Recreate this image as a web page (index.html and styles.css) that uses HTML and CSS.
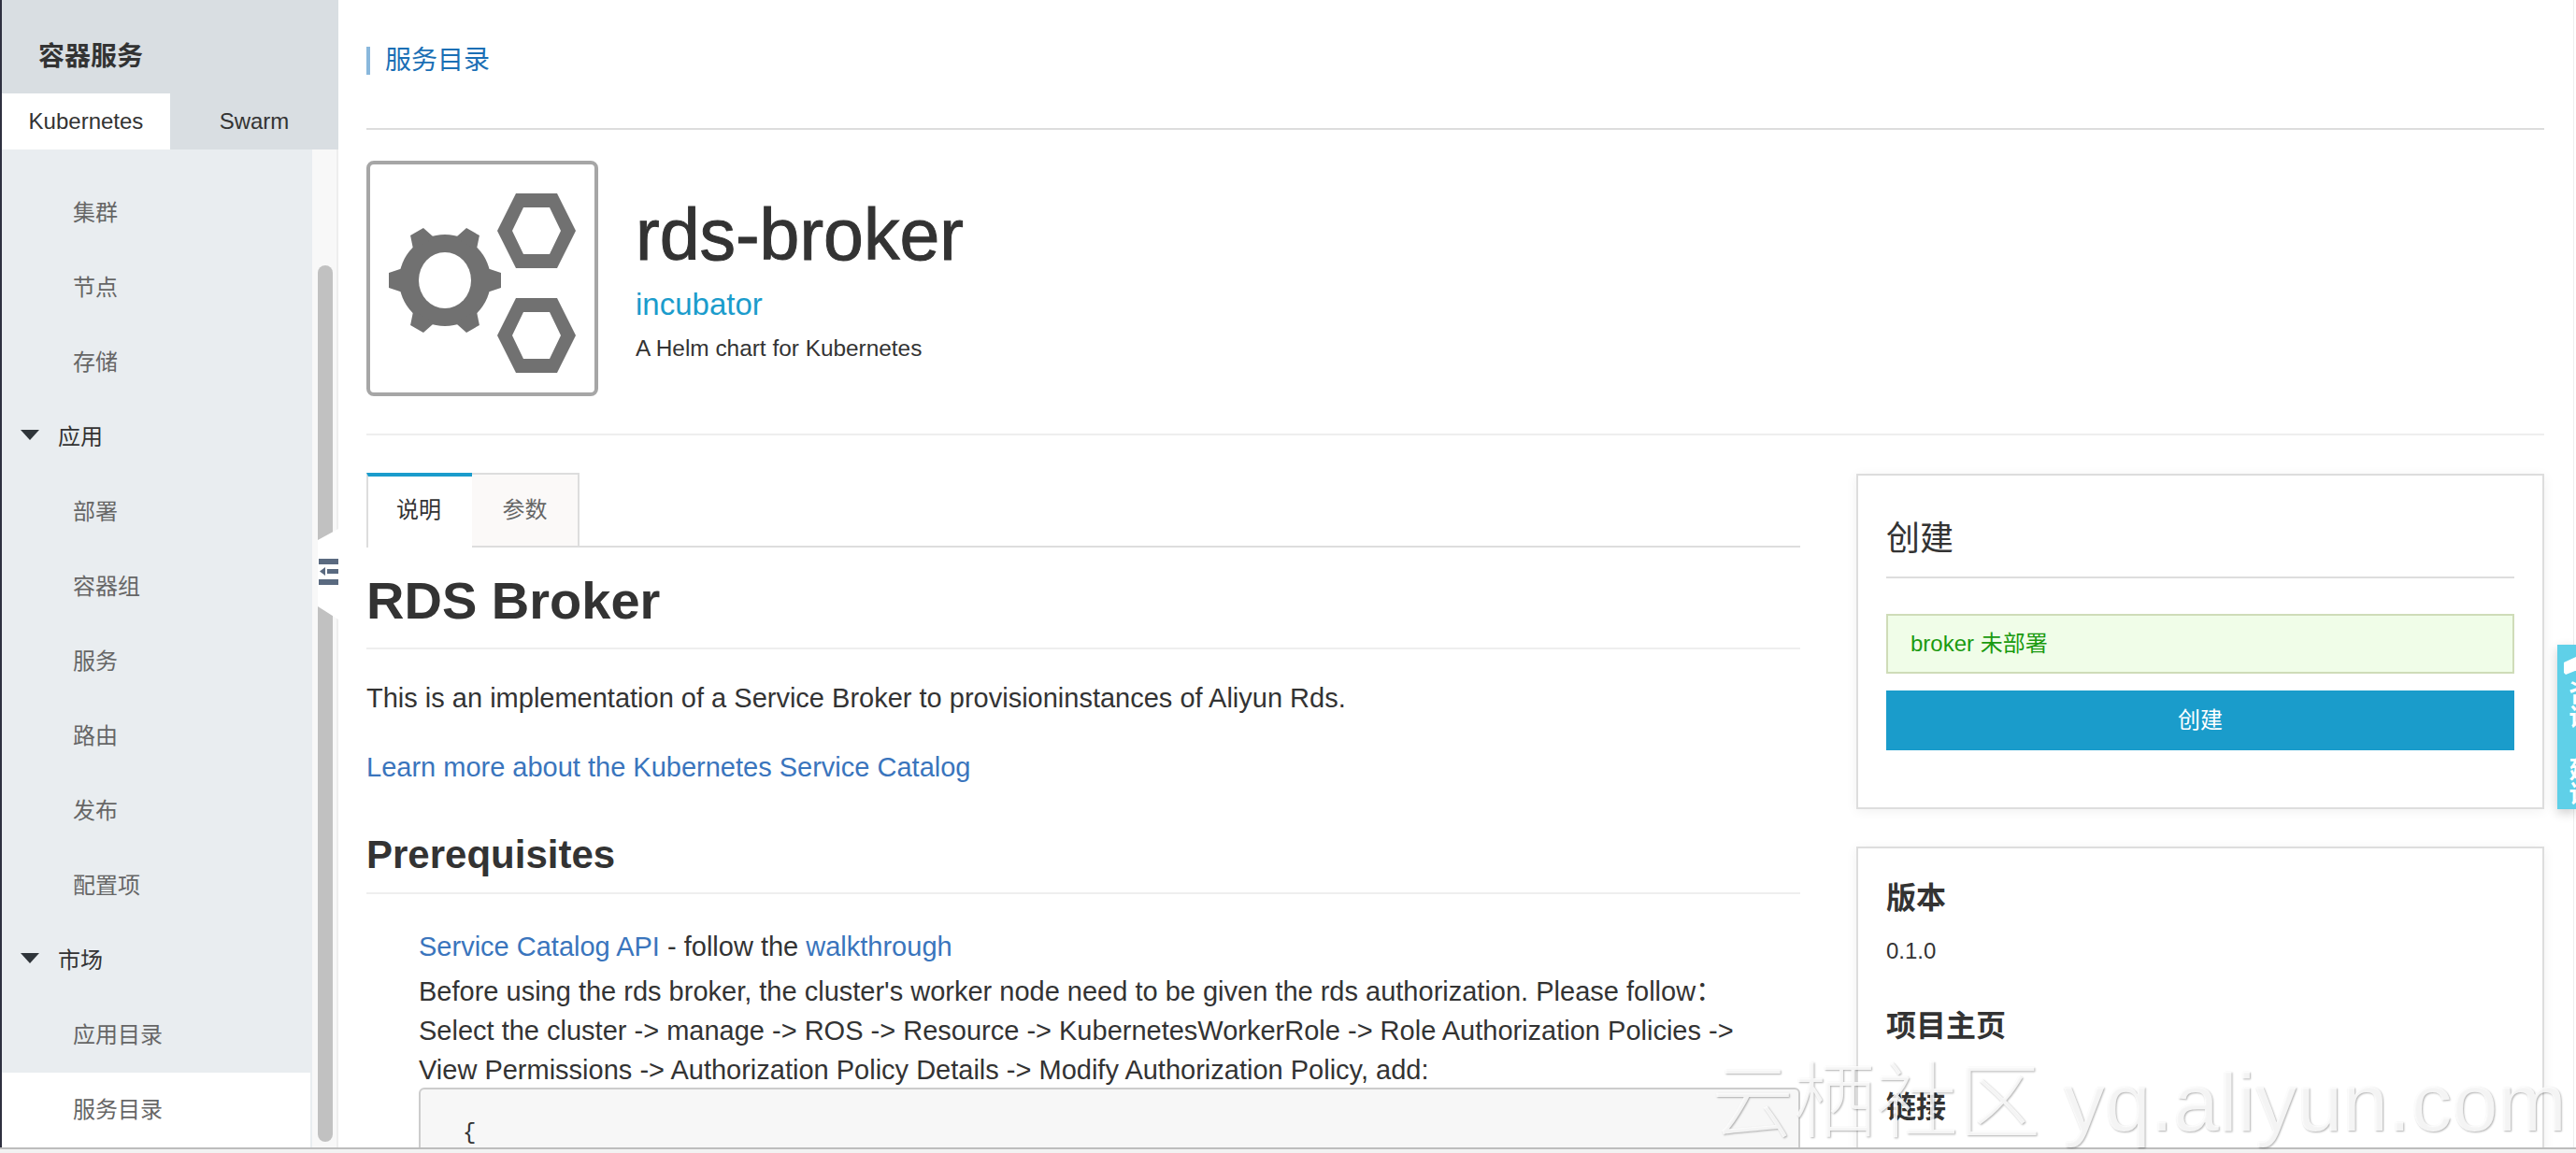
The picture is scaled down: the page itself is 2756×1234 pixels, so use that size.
FILE: index.html
```html
<!DOCTYPE html>
<html lang="zh-CN">

<head>
    <meta charset="UTF-8">
    <title>服务目录 - 容器服务</title>
    <link rel="stylesheet" href="styles.css">
</head>

<body>
    <div class="app">
        <aside class="sidebar">
            <div class="side-title">容器服务</div>
            <div class="side-tabs">
                <div class="side-tab active">Kubernetes</div>
                <div class="side-tab">Swarm</div>
            </div>
            <div class="side-body">
                <ul class="nav">
                    <li>集群</li>
                    <li>节点</li>
                    <li>存储</li>
                    <li class="group"><i class="caret"></i>应用</li>
                    <li>部署</li>
                    <li>容器组</li>
                    <li>服务</li>
                    <li>路由</li>
                    <li>发布</li>
                    <li>配置项</li>
                    <li class="group"><i class="caret"></i>市场</li>
                    <li>应用目录</li>
                    <li class="current">服务目录</li>
                </ul>
                <div class="track">
                    <div class="thumb"></div>
                </div>
            </div>
        </aside>

        <main class="main">
            <div class="crumb"><a href="#">服务目录</a></div>

            <header class="chart-head">
                <div class="chart-logo">
                    <svg width="240" height="244" viewBox="4 4 240 244">
                        <g fill="#717171" transform="translate(84 128)">
                            <circle r="49"></circle>
                            <polygon points="-13,-45 -8,-60 8,-60 13,-45" transform="rotate(30)"></polygon>
                            <polygon points="-13,-45 -8,-60 8,-60 13,-45" transform="rotate(90)"></polygon>
                            <polygon points="-13,-45 -8,-60 8,-60 13,-45" transform="rotate(150)"></polygon>
                            <polygon points="-13,-45 -8,-60 8,-60 13,-45" transform="rotate(210)"></polygon>
                            <polygon points="-13,-45 -8,-60 8,-60 13,-45" transform="rotate(270)"></polygon>
                            <polygon points="-13,-45 -8,-60 8,-60 13,-45" transform="rotate(330)"></polygon>
                            <ellipse rx="28" ry="30" fill="#fff"></ellipse>
                        </g>
                        <path fill="#717171" fill-rule="evenodd" d="M140 75l20-40h44l20 40-20 40h-44zM156 75l12 25h28l12-25-12-25h-28z"></path>
                        <path fill="#717171" fill-rule="evenodd" d="M140 187l20-40h44l20 40-20 40h-44zM156 187l12 25h28l12-25-12-25h-28z"></path>
                    </svg>
                </div>
                <div class="chart-info">
                    <h2 class="chart-name">rds-broker</h2>
                    <div class="chart-repo">incubator</div>
                    <div class="chart-desc">A Helm chart for Kubernetes</div>
                </div>
            </header>

            <div class="columns">
                <section class="readme">
                    <div class="tabs">
                        <div class="tab active">说明</div>
                        <div class="tab">参数</div>
                    </div>
                    <h1>RDS Broker</h1>
                    <p class="first">This is an implementation of a Service Broker to provisioninstances of Aliyun Rds.</p>
                    <p class="more"><a href="#">Learn more about the Kubernetes Service Catalog</a></p>
                    <h2 class="sub">Prerequisites</h2>
                    <div class="prereq">
                        <p class="lead"><a href="#">Service Catalog API</a> - follow the <a href="#">walkthrough</a></p>
                        <p>Before using the rds broker, the cluster's worker node need to be given the rds authorization. Please follow：</p>
                        <p>Select the cluster -&gt; manage -&gt; ROS -&gt; Resource -&gt; KubernetesWorkerRole -&gt; Role Authorization Policies -&gt;</p>
                        <p>View Permissions -&gt; Authorization Policy Details -&gt; Modify Authorization Policy, add:</p>
                        <pre>{</pre>
                    </div>
                </section>

                <section class="side-cards">
                    <div class="card create">
                        <div class="card-title">创建</div>
                        <div class="notice">broker 未部署</div>
                        <button class="btn">创建</button>
                    </div>
                    <div class="card meta">
                        <h3>版本</h3>
                        <div class="value">0.1.0</div>
                        <h3 class="gap">项目主页</h3>
                        <h3 class="gap">链接</h3>
                    </div>
                </section>
            </div>
        </main>
        <div class="edge"></div>
    </div>
    <div class="statusbar"></div>

    <!-- overlays -->
    <div class="collapse">
        <svg width="21" height="28" viewBox="0 0 21 28">
            <path fill="#5a6a80" d="M0 0h21v6H0zM0 22h21v6H0zM9 11h12v5H9zM7 9v9l-6-4.5z"></path>
        </svg>
    </div>
    <div class="feedback">
        <svg width="18" height="22" viewBox="0 0 18 22">
            <path fill="#fff" d="M0 7l15-7h3v16H12L2 20 0 18z"></path>
        </svg>
        <span>咨询·建议</span>
    </div>
    <div class="watermark">云栖社区 yq.aliyun.com</div>
</body>

</html>
```

FILE: styles.css
```css
* {
    box-sizing: border-box;
}

html,
body {
    margin: 0;
    height: 100%;
    overflow: hidden;
    background: #fff;
    color: #333;
    font-family: "Liberation Sans", "Noto Sans CJK SC", sans-serif;
}

a {
    color: #3a75bd;
    text-decoration: none;
}

.app {
    display: flex;
    height: 1228px;
    border-left: 2px solid #2e3040;
}

.statusbar {
    height: 6px;
    background: #f2f2f2;
    border-top: 2px solid #bdbdbd;
}

/* sidebar */
.sidebar {
    display: flex;
    flex-direction: column;
    flex: none;
    width: 360px;
    background: #d9dee2;
}

.side-title {
    height: 100px;
    padding: 43px 0 0 39px;
    font-size: 28px;
    line-height: 36px;
    font-weight: bold;
}

.side-tabs {
    display: flex;
    height: 60px;
}

.side-tab {
    width: 180px;
    font-size: 24px;
    line-height: 60px;
    text-align: center;
}

.side-tab.active {
    background: #fff;
}

.side-body {
    display: flex;
    flex: 1;
    min-height: 0;
}

.nav {
    width: 332px;
    margin: 0;
    padding: 28px 2px 0 0;
    list-style: none;
    background: #e9edf0;
}

.nav li {
    display: flex;
    align-items: center;
    height: 80px;
    padding: 0 0 6px 76px;
    font-size: 24px;
    color: #666;
}

.nav li.group {
    padding-left: 20px;
    color: #333;
}

.nav li.current {
    background: #fff;
}

.caret {
    width: 0;
    height: 0;
    margin-right: 20px;
    border-top: 11px solid #2f353a;
    border-left: 10px solid transparent;
    border-right: 10px solid transparent;
}

.track {
    width: 28px;
    padding: 124px 0 0 6px;
    border-right: 2px solid #eee;
    background: #f8f8f8;
}

.thumb {
    width: 16px;
    height: 938px;
    border-radius: 8px;
    background: #c1c1c1;
}

/* main */
.main {
    flex: 1;
    min-width: 0;
    height: 100%;
    padding: 50px 31px 0 30px;
    overflow: hidden;
}

.edge {
    flex: none;
    width: 3px;
    border-left: 1px solid #eee;
}

.crumb {
    height: 30px;
    padding-left: 16px;
    border-left: 4px solid #8ab8dc;
    font-size: 28px;
    line-height: 30px;
}

.crumb a {
    color: #1a6fb5;
}

.chart-head {
    display: flex;
    margin-top: 57px;
    padding: 33px 0 40px;
    border-top: 2px solid #ddd;
    border-bottom: 2px solid #eee;
}

.chart-logo {
    flex: none;
    width: 248px;
    height: 252px;
    border: 4px solid #a6a6a6;
    border-radius: 8px;
}

.chart-logo svg {
    display: block;
}

.chart-info {
    padding: 39px 0 0 40px;
}

.chart-name {
    margin: 0;
    font-size: 77px;
    line-height: 80px;
    font-weight: normal;
    -webkit-text-stroke: 1px #333;
}

.chart-repo {
    margin-top: 15px;
    font-size: 33px;
    line-height: 40px;
    color: #1b9ccc;
}

.chart-desc {
    margin-top: 12px;
    font-size: 24.4px;
    line-height: 30px;
}

.columns {
    display: flex;
    gap: 60px;
}

.readme {
    flex: none;
    width: 1534px;
    padding-top: 40px;
}

.tabs {
    display: flex;
    height: 80px;
    border-bottom: 2px solid #ddd;
}

.tab {
    width: 115px;
    height: 80px;
    border: 2px solid #ddd;
    border-left: 0;
    background: #fbf9f8;
    color: #666;
    font-size: 24px;
    line-height: 76px;
    text-align: center;
}

.tab.active {
    width: 113px;
    padding-right: 3px;
    border-top: 4px solid #1b9ccc;
    border-left: 2px solid #ddd;
    border-right: 0;
    border-bottom: 0;
    background: #fff;
    color: #333;
    line-height: 72px;
}

h1 {
    margin: 25px 0 0;
    padding-bottom: 18px;
    border-bottom: 2px solid #eee;
    font-size: 56px;
    line-height: 64px;
}

.readme p {
    margin: 0;
    font-size: 29px;
    line-height: 42px;
}

.readme p.first {
    margin-top: 31px;
}

.readme p.more {
    margin-top: 32px;
}

.sub {
    margin: 48px 0 0;
    padding-bottom: 15px;
    border-bottom: 2px solid #eee;
    font-size: 42px;
    line-height: 50px;
}

.prereq {
    margin-top: 35px;
    padding-left: 56px;
}

.readme p.lead {
    margin-bottom: 6px;
}

pre {
    min-height: 200px;
    margin: -2px 0 0;
    padding: 30px 0 0 45px;
    border: 2px solid #ccc;
    border-radius: 6px;
    background: #f7f7f7;
    font-family: "Liberation Mono", monospace;
    font-size: 24px;
    line-height: 34px;
}

.side-cards {
    flex: 1;
    min-width: 0;
    padding-top: 41px;
}

.card {
    padding: 0 30px;
    border: 2px solid #ddd;
    box-shadow: 0 2px 12px rgba(0, 0, 0, 0.06);
}

.create {
    height: 359px;
    padding-top: 43px;
}

.card-title {
    padding-bottom: 15px;
    border-bottom: 2px solid #ddd;
    font-size: 36px;
    line-height: 50px;
}

.notice {
    height: 64px;
    margin-top: 38px;
    padding-left: 24px;
    border: 2px solid #cfdcb8;
    background: #f0fde8;
    color: #1a9a10;
    font-size: 24px;
    line-height: 60px;
}

.btn {
    display: block;
    width: 100%;
    height: 64px;
    margin-top: 18px;
    border: 0;
    padding-bottom: 7px;
    background: #1a9ccb;
    color: #fff;
    font-family: inherit;
    font-size: 24px;
}

.meta {
    height: 400px;
    margin-top: 40px;
    padding-top: 31px;
}

.meta h3 {
    margin: 0;
    font-size: 32px;
    line-height: 44px;
}

.meta h3.gap {
    margin-top: 43px;
}

.value {
    margin-top: 20px;
    font-size: 24px;
    line-height: 30px;
}

/* overlays */
.collapse {
    position: absolute;
    left: 340px;
    top: 566px;
    width: 22px;
    height: 97px;
    padding: 32px 0 0 1px;
    background: #fff;
    clip-path: polygon(0 12px, 100% 0, 100% 100%, 0 83px);
}

.collapse svg {
    display: block;
}

.feedback {
    position: absolute;
    right: 0;
    top: 690px;
    width: 20px;
    height: 176px;
    padding: 12px 0 0 7px;
    overflow: hidden;
    background: #5fd0e8;
    box-shadow: 0 4px 12px rgba(0, 0, 0, 0.2);
    color: #fff;
}

.feedback svg {
    display: block;
}

.feedback span {
    display: block;
    width: 27px;
    margin: 4px 0 0 2px;
    writing-mode: vertical-rl;
    text-orientation: upright;
    font-size: 26px;
    font-weight: bold;
    line-height: 27px;
}

.watermark {
    position: absolute;
    left: 1831px;
    top: 1130px;
    color: rgba(255, 255, 255, 0.85);
    font-size: 88px;
    font-weight: 300;
    line-height: 100px;
    white-space: nowrap;
    text-shadow: 1px 1px 2px rgba(0, 0, 0, 0.3);
    pointer-events: none;
}
```
